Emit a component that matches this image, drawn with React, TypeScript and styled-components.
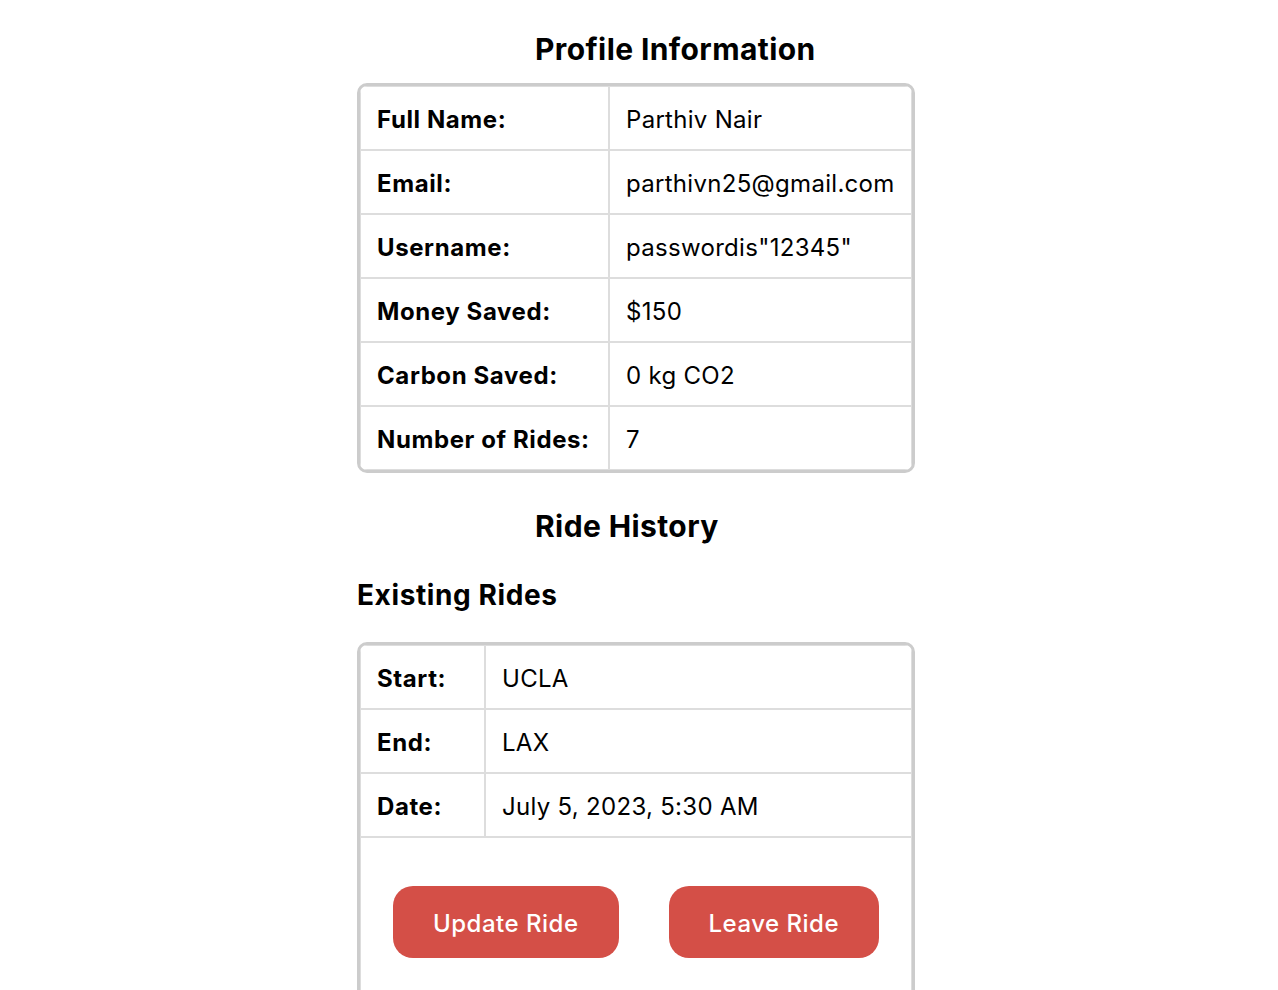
import React from "react";
import styled, { createGlobalStyle } from "styled-components";

const Global = createGlobalStyle`
  html, body { margin: 0; padding: 0; background: #fff; }
  body { font-family: Inter, "Noto Sans", "Liberation Sans", sans-serif; color: #000; }
`;

const Page = styled.div`
  width: 558px;
  margin-left: 357px;
  padding-top: 29px;
  padding-bottom: 40px;
`;

const Heading = styled.h2<{ $mt?: number }>`
  font-size: 30px;
  font-weight: 700;
  margin: ${(p) => p.$mt ?? 0}px 0 0;
  padding-left: 178px;
  line-height: 40px;
  letter-spacing: 0.4px;
`;

const SubHeading = styled.h3`
  font-size: 28px;
  font-weight: 700;
  margin: 31px 0 0;
  line-height: 36px;
  letter-spacing: 0.6px;
`;

const Table = styled.table<{ $mt: number }>`
  width: 558px;
  margin-top: ${(p) => p.$mt}px;
  border: 3px solid #cccccc;
  border-radius: 10px;
  border-collapse: separate;
  border-spacing: 0;
  overflow: hidden;
`;

const Cell = styled.td<{ $label?: boolean; $w?: number }>`
  border: 1px solid #dddddd;
  padding: 3px 16px 0;
  height: 59px;
  line-height: 30px;
  font-size: 24px;
  font-weight: ${(p) => (p.$label ? 700 : 400)};
  letter-spacing: ${(p) => (p.$label ? "0.6px" : "0.3px")};
  width: ${(p) => (p.$w ? `${p.$w}px` : "auto")};
  text-align: left;
  vertical-align: middle;
  white-space: nowrap;
`;

const ActionCell = styled.td`
  border: 1px solid #dddddd;
  padding: 48px 0 40px 32px;
`;

const Actions = styled.div`
  display: flex;
  gap: 50px;
`;

const Button = styled.button`
  background: #d44f47;
  color: #fff;
  border: none;
  border-radius: 20px;
  height: 72px;
  padding: 2px 40px 0;
  font-family: Inter, "Noto Sans", "Liberation Sans", sans-serif;
  font-size: 24px;
  font-weight: 500;
  letter-spacing: 0.5px;
  cursor: pointer;
`;

const profile = [
  ["Full Name:", "Parthiv Nair"],
  ["Email:", "parthivn25@gmail.com"],
  ["Username:", 'passwordis"12345"'],
  ["Money Saved:", "$150"],
  ["Carbon Saved:", "0 kg CO2"],
  ["Number of Rides:", "7"],
];

const ride = [
  ["Start:", "UCLA"],
  ["End:", "LAX"],
  ["Date:", "July 5, 2023, 5:30 AM"],
];

export default function App() {
  return (
    <>
      <Global />
      <Page>
        <Heading>Profile Information</Heading>
        <Table $mt={14}>
          <tbody>
            {profile.map(([k, v]) => (
              <tr key={k}>
                <Cell $label $w={215}>{k}</Cell>
                <Cell>{v}</Cell>
              </tr>
            ))}
          </tbody>
        </Table>
        <Heading $mt={33}>Ride History</Heading>
        <SubHeading>Existing Rides</SubHeading>
        <Table $mt={29}>
          <tbody>
            {ride.map(([k, v]) => (
              <tr key={k}>
                <Cell $label $w={91}>{k}</Cell>
                <Cell>{v}</Cell>
              </tr>
            ))}
            <tr>
              <ActionCell colSpan={2}>
                <Actions>
                  <Button>Update Ride</Button>
                  <Button>Leave Ride</Button>
                </Actions>
              </ActionCell>
            </tr>
          </tbody>
        </Table>
      </Page>
    </>
  );
}
